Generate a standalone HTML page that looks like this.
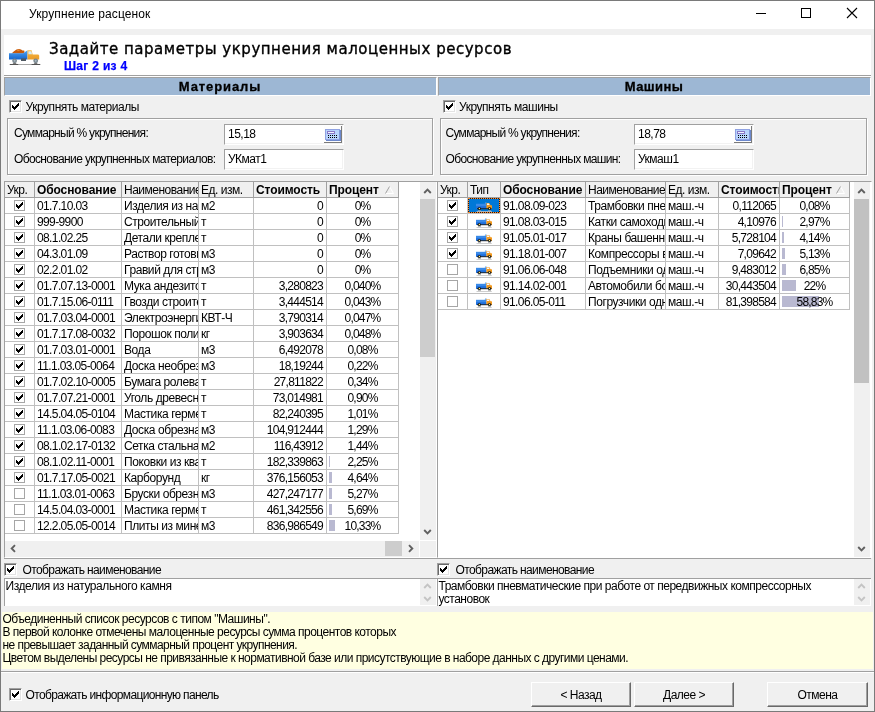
<!DOCTYPE html>
<html lang="ru"><head><meta charset="utf-8"><title>Укрупнение расценок</title>
<style>
*{box-sizing:border-box;margin:0;padding:0}
html,body{width:875px;height:712px;overflow:hidden;background:#f0f0f0}
body{font-family:"Liberation Sans","DejaVu Sans",sans-serif;font-size:11px;color:#000;position:relative}
#root{position:absolute;left:0;top:0;width:875px;height:712px;will-change:transform}
.a{position:absolute}
.t{position:absolute;white-space:nowrap;line-height:13px;height:13px;letter-spacing:-0.58px;font-size:12px}
.b{font-weight:bold}
.cell{position:absolute;white-space:nowrap;overflow:hidden;line-height:13px;height:15px;padding-top:2px}
.cell span,.hdr span,.inp span,.btn span{font-size:12px;letter-spacing:-0.5px}
.hl{position:absolute;height:1px;background:#c0c0c0}
.vl{position:absolute;width:1px;background:#c0c0c0}
.hdr{position:absolute;background:#f0f0f0;border-right:1px solid #a0a0a0;border-bottom:1px solid #a0a0a0;height:16px;line-height:13px;padding:2px 0 0 2px;overflow:hidden;white-space:nowrap}
.hdr.b span{letter-spacing:-0.1px}
.cb{position:absolute;width:13px;height:13px;background:#fff;border:1px solid #a0a0a0;border-right-color:#fff;border-bottom-color:#fff;box-shadow:inset 1px 1px 0 #696969, inset -1px -1px 0 #e3e3e3}
.fcb{position:absolute;width:11px;height:11px;background:#fff;border:1px solid #a6a6a6}
.inp{position:absolute;background:#fff;border:1px solid #a0a0a0;border-right-color:#fff;border-bottom-color:#fff;line-height:13px;padding:3px 0 0 3px;box-shadow:inset -1px -1px 0 #f2f2f2}
.btn{position:absolute;height:25px;background:#f0f0f0;border:1px solid #fff;border-right-color:#696969;border-bottom-color:#696969;box-shadow:inset -1px -1px 0 #a0a0a0;text-align:center;line-height:13px;padding-top:6px}
.sb{position:absolute;background:#f0f0f0}
.th{position:absolute;background:#cdcdcd}
</style></head>
<body><div id="root">
<div class="a" style="left:0px;top:0px;width:875px;height:712px;border:1px solid #7a7a7a;background:#f0f0f0"></div>
<div class="a" style="left:1px;top:1px;width:873px;height:28px;background:#fff"></div>
<div class="t" style="left:29px;top:7px;font-size:12px;line-height:14px;height:14px;letter-spacing:0.114px">Укрупнение расценок</div>
<svg class="a" style="left:740px;top:1px" width="134" height="28" viewBox="0 0 134 28" shape-rendering="crispEdges"><rect x="16" y="12" width="10" height="1" fill="#000"/><rect x="61.5" y="7.5" width="9" height="9" fill="none" stroke="#000" stroke-width="1"/><path d="M107 7l10 10M117 7l-10 10" stroke="#000" stroke-width="1.1" shape-rendering="auto"/></svg>
<div class="a" style="left:4px;top:35px;width:867px;height:40px;background:#fff"></div>
<div class="a" style="left:4px;top:75px;width:867px;height:1px;background:#a0a0a0"></div>
<div class="a" style="left:4px;top:76px;width:867px;height:1px;background:#fff"></div>
<svg class="a" style="left:8px;top:47px" width="34" height="19" viewBox="0 0 34 19"><defs><linearGradient id="gb" x1="0" y1="0" x2="0" y2="1"><stop offset="0" stop-color="#4ea4f4"/><stop offset="1" stop-color="#1565cc"/></linearGradient><linearGradient id="go" x1="0" y1="0" x2="0" y2="1"><stop offset="0" stop-color="#f8b840"/><stop offset="1" stop-color="#e89a28"/></linearGradient></defs><path d="M3.5 6.4L6 4.2L8.5 2.6L11 2L13 2.4L14.5 3.6L16.2 3.4L16.5 5L15.5 6.4z" fill="#c65a0a"/><path d="M8.5 3.2L11 2.6L12 3.6L10 4.2z" fill="#e8882a"/><path d="M1 6.2H15.2L19.5 3.2V12.6H1z" fill="url(#gb)"/><path d="M19.5 12.6V3.6L20.4 3.2H23.6L24.6 7.6H30.4L31.2 8.6V12.6z" fill="url(#go)"/><path d="M20.4 4.2H23.4L24 7.2H20.4z" fill="#d4ebf8"/><rect x="13" y="11.4" width="5" height="2.6" fill="#4f5962"/><circle cx="6.6" cy="13.8" r="2.4" fill="#78868e"/><circle cx="27.7" cy="13.8" r="2.4" fill="#78868e"/><circle cx="6.6" cy="13.8" r="1" fill="#aab8c0"/><circle cx="27.7" cy="13.8" r="1" fill="#aab8c0"/><rect x="1.8" y="17" width="30.4" height="1" fill="#a8a8a8"/><rect x="1.8" y="17" width="8.4" height="1" fill="#555"/><rect x="23.6" y="17" width="8.6" height="1" fill="#555"/><path d="M4.6 17L5.4 16h2.4l.8 1zM25.7 17l.8-1h2.4l.8 1z" fill="#777"/></svg>
<div class="t" style="left:49px;top:39px;font-family:'DejaVu Sans',sans-serif;font-size:15px;line-height:20px;height:20px;-webkit-text-stroke:0.35px #000;letter-spacing:0.521px">Задайте параметры укрупнения малоценных ресурсов</div>
<div class="t b" style="left:64px;top:60px;color:#00f;-webkit-text-stroke:0.25px #00f;letter-spacing:0.308px">Шаг 2 из 4</div>
<div class="a" style="left:4px;top:77px;width:433px;height:19px;background:#9db7d4;border:1px solid #a0a0a0;border-right-color:#fff;border-bottom-color:#fff"></div>
<div class="a" style="left:438px;top:77px;width:433px;height:19px;background:#9db7d4;border:1px solid #a0a0a0;border-right-color:#fff;border-bottom-color:#fff"></div>
<div class="t b" style="left:4px;top:79px;width:432px;text-align:center;font-size:13px;line-height:15px;height:15px;letter-spacing:0.9px;-webkit-text-stroke:0.3px #000">Материалы</div>
<div class="t b" style="left:438px;top:79px;width:432px;text-align:center;font-size:13px;line-height:15px;height:15px;letter-spacing:0.4px;-webkit-text-stroke:0.3px #000">Машины</div>
<div class="cb" style="left:9px;top:100px"><svg class="a" style="left:2px;top:2px" width="7" height="7" viewBox="0 0 7 7" shape-rendering="crispEdges"><path d="M0 2h1v1h1v1h1v-1h1v-1h1v-1h1v-1h1v3h-1v1h-1v1h-1v1h-1v1h-1v-1h-1v-1h-1z" fill="#000"/></svg></div>
<div class="t" style="left:25.5px;top:101px;;letter-spacing:-0.445px">Укрупнять материалы</div>
<div class="cb" style="left:443px;top:100px"><svg class="a" style="left:2px;top:2px" width="7" height="7" viewBox="0 0 7 7" shape-rendering="crispEdges"><path d="M0 2h1v1h1v1h1v-1h1v-1h1v-1h1v-1h1v3h-1v1h-1v1h-1v1h-1v1h-1v-1h-1v-1h-1z" fill="#000"/></svg></div>
<div class="t" style="left:459px;top:101px;;letter-spacing:-0.456px">Укрупнять машины</div>
<div class="a" style="left:7px;top:118px;width:426px;height:57px;border:1px solid #a0a0a0;box-shadow:inset 1px 1px 0 #fff,1px 1px 0 #fff"></div>
<div class="a" style="left:440px;top:118px;width:427px;height:57px;border:1px solid #a0a0a0;box-shadow:inset 1px 1px 0 #fff,1px 1px 0 #fff"></div>
<div class="t" style="left:14px;top:127px;;letter-spacing:-0.714px">Суммарный % укрупнения:</div>
<div class="t" style="left:14px;top:153px;;letter-spacing:-0.629px">Обоснование укрупненных материалов:</div>
<div class="t" style="left:445.5px;top:127px;;letter-spacing:-0.714px">Суммарный % укрупнения:</div>
<div class="t" style="left:445.5px;top:153px;;letter-spacing:-0.648px">Обоснование укрупненных машин:</div>
<div class="inp" style="left:224px;top:124px;width:120px;height:21px"><span>15,18</span></div>
<div class="a" style="left:324px;top:126px;width:18px;height:17px;background:#fdfdfd;border-right:1px solid #7a7a7a;border-bottom:1px solid #7a7a7a"></div><svg class="a" style="left:325px;top:129px" width="16" height="12" viewBox="0 0 16 12" shape-rendering="crispEdges"><rect x="0" y="0" width="15" height="11" fill="#90a2e2"/><rect x="1" y="1" width="13" height="9" fill="#b8d4fc"/><rect x="15" y="1" width="1" height="11" fill="#6c88cc"/><rect x="1" y="11" width="15" height="1" fill="#6c88cc"/><rect x="14" y="1" width="1" height="10" fill="#8098d8"/><rect x="2" y="2" width="8" height="3" fill="#8a78c6"/><rect x="3" y="3" width="6" height="1" fill="#eef4ff"/><rect x="3" y="6" width="1" height="1" fill="#000"/><rect x="5" y="6" width="1" height="1" fill="#000"/><rect x="7" y="6" width="1" height="1" fill="#000"/><rect x="9" y="6" width="1" height="1" fill="#000"/><rect x="11" y="6" width="1" height="1" fill="#000"/><rect x="3" y="8" width="1" height="1" fill="#000"/><rect x="5" y="8" width="1" height="1" fill="#000"/><rect x="7" y="8" width="1" height="1" fill="#000"/><rect x="9" y="8" width="1" height="1" fill="#000"/><rect x="11" y="8" width="1" height="1" fill="#000"/></svg>
<div class="inp" style="left:224px;top:149px;width:120px;height:21px"><span>УКмат1</span></div>
<div class="inp" style="left:634px;top:124px;width:120px;height:21px"><span>18,78</span></div>
<div class="a" style="left:734px;top:126px;width:18px;height:17px;background:#fdfdfd;border-right:1px solid #7a7a7a;border-bottom:1px solid #7a7a7a"></div><svg class="a" style="left:735px;top:129px" width="16" height="12" viewBox="0 0 16 12" shape-rendering="crispEdges"><rect x="0" y="0" width="15" height="11" fill="#90a2e2"/><rect x="1" y="1" width="13" height="9" fill="#b8d4fc"/><rect x="15" y="1" width="1" height="11" fill="#6c88cc"/><rect x="1" y="11" width="15" height="1" fill="#6c88cc"/><rect x="14" y="1" width="1" height="10" fill="#8098d8"/><rect x="2" y="2" width="8" height="3" fill="#8a78c6"/><rect x="3" y="3" width="6" height="1" fill="#eef4ff"/><rect x="3" y="6" width="1" height="1" fill="#000"/><rect x="5" y="6" width="1" height="1" fill="#000"/><rect x="7" y="6" width="1" height="1" fill="#000"/><rect x="9" y="6" width="1" height="1" fill="#000"/><rect x="11" y="6" width="1" height="1" fill="#000"/><rect x="3" y="8" width="1" height="1" fill="#000"/><rect x="5" y="8" width="1" height="1" fill="#000"/><rect x="7" y="8" width="1" height="1" fill="#000"/><rect x="9" y="8" width="1" height="1" fill="#000"/><rect x="11" y="8" width="1" height="1" fill="#000"/></svg>
<div class="inp" style="left:634px;top:149px;width:120px;height:21px"><span>Укмаш1</span></div>
<div class="a" style="left:4px;top:181px;width:434px;height:377px;background:#fff;border-left:1px solid #a0a0a0;border-top:1px solid #a0a0a0;border-right:1px solid #fff;border-bottom:1px solid #fff"></div>
<div class="hdr" style="left:5px;top:182px;width:30px;"><span>Укр.</span></div>
<div class="hdr b" style="left:35px;top:182px;width:87px;"><span>Обоснование</span></div>
<div class="hdr" style="left:122px;top:182px;width:77px;"><span>Наименование</span></div>
<div class="hdr" style="left:199px;top:182px;width:55px;"><span>Ед. изм.</span></div>
<div class="hdr b" style="left:254px;top:182px;width:73px;"><span>Стоимость</span></div>
<div class="hdr b" style="left:327px;top:182px;width:72px;"><span>Процент</span></div>
<svg class="a" style="left:385px;top:186px" width="9" height="8" viewBox="0 0 9 8"><path d="M4.5 0.5L8.5 7.5H0.5" fill="none" stroke="#fff"/><path d="M4.5 0.5L0.5 7.5" fill="none" stroke="#a0a0a0"/></svg>
<div class="hl" style="left:5px;top:213px;width:394px"></div>
<div class="hl" style="left:5px;top:229px;width:394px"></div>
<div class="hl" style="left:5px;top:245px;width:394px"></div>
<div class="hl" style="left:5px;top:261px;width:394px"></div>
<div class="hl" style="left:5px;top:277px;width:394px"></div>
<div class="hl" style="left:5px;top:293px;width:394px"></div>
<div class="hl" style="left:5px;top:309px;width:394px"></div>
<div class="hl" style="left:5px;top:325px;width:394px"></div>
<div class="hl" style="left:5px;top:341px;width:394px"></div>
<div class="hl" style="left:5px;top:357px;width:394px"></div>
<div class="hl" style="left:5px;top:373px;width:394px"></div>
<div class="hl" style="left:5px;top:389px;width:394px"></div>
<div class="hl" style="left:5px;top:405px;width:394px"></div>
<div class="hl" style="left:5px;top:421px;width:394px"></div>
<div class="hl" style="left:5px;top:437px;width:394px"></div>
<div class="hl" style="left:5px;top:453px;width:394px"></div>
<div class="hl" style="left:5px;top:469px;width:394px"></div>
<div class="hl" style="left:5px;top:485px;width:394px"></div>
<div class="hl" style="left:5px;top:501px;width:394px"></div>
<div class="hl" style="left:5px;top:517px;width:394px"></div>
<div class="hl" style="left:5px;top:533px;width:394px"></div>
<div class="vl" style="left:34px;top:198px;height:336px"></div>
<div class="vl" style="left:121px;top:198px;height:336px"></div>
<div class="vl" style="left:198px;top:198px;height:336px"></div>
<div class="vl" style="left:253px;top:198px;height:336px"></div>
<div class="vl" style="left:326px;top:198px;height:336px"></div>
<div class="vl" style="left:398px;top:198px;height:336px"></div>
<div class="fcb" style="left:14px;top:200px"><svg class="a" style="left:1px;top:1px" width="7" height="7" viewBox="0 0 7 7" shape-rendering="crispEdges"><path d="M0 2h1v1h1v1h1v-1h1v-1h1v-1h1v-1h1v3h-1v1h-1v1h-1v1h-1v1h-1v-1h-1v-1h-1z" fill="#000"/></svg></div>
<div class="cell" style="left:35px;top:198px;width:86px;padding-left:2px"><span style="letter-spacing:-0.62px">01.7.10.03</span></div>
<div class="cell" style="left:122px;top:198px;width:76px;padding-left:2px"><span style="letter-spacing:-0.42px">Изделия из натурального камня</span></div>
<div class="cell" style="left:199px;top:198px;width:54px;padding-left:2px"><span style="letter-spacing:-0.42px">м2</span></div>
<div class="cell" style="left:254px;top:198px;width:72px;text-align:right;padding-right:3px;letter-spacing:-0.72px"><span style="letter-spacing:-0.72px">0</span></div>
<div class="cell" style="left:327px;top:198px;width:71px;text-align:center"><span style="letter-spacing:-0.8px">0%</span></div>
<div class="fcb" style="left:14px;top:216px"><svg class="a" style="left:1px;top:1px" width="7" height="7" viewBox="0 0 7 7" shape-rendering="crispEdges"><path d="M0 2h1v1h1v1h1v-1h1v-1h1v-1h1v-1h1v3h-1v1h-1v1h-1v1h-1v1h-1v-1h-1v-1h-1z" fill="#000"/></svg></div>
<div class="cell" style="left:35px;top:214px;width:86px;padding-left:2px"><span style="letter-spacing:-0.62px">999-9900</span></div>
<div class="cell" style="left:122px;top:214px;width:76px;padding-left:2px"><span style="letter-spacing:-0.42px">Строительный мусор</span></div>
<div class="cell" style="left:199px;top:214px;width:54px;padding-left:2px"><span style="letter-spacing:-0.42px">т</span></div>
<div class="cell" style="left:254px;top:214px;width:72px;text-align:right;padding-right:3px;letter-spacing:-0.72px"><span style="letter-spacing:-0.72px">0</span></div>
<div class="cell" style="left:327px;top:214px;width:71px;text-align:center"><span style="letter-spacing:-0.8px">0%</span></div>
<div class="fcb" style="left:14px;top:232px"><svg class="a" style="left:1px;top:1px" width="7" height="7" viewBox="0 0 7 7" shape-rendering="crispEdges"><path d="M0 2h1v1h1v1h1v-1h1v-1h1v-1h1v-1h1v3h-1v1h-1v1h-1v1h-1v1h-1v-1h-1v-1h-1z" fill="#000"/></svg></div>
<div class="cell" style="left:35px;top:230px;width:86px;padding-left:2px"><span style="letter-spacing:-0.62px">08.1.02.25</span></div>
<div class="cell" style="left:122px;top:230px;width:76px;padding-left:2px"><span style="letter-spacing:-0.42px">Детали крепления</span></div>
<div class="cell" style="left:199px;top:230px;width:54px;padding-left:2px"><span style="letter-spacing:-0.42px">т</span></div>
<div class="cell" style="left:254px;top:230px;width:72px;text-align:right;padding-right:3px;letter-spacing:-0.72px"><span style="letter-spacing:-0.72px">0</span></div>
<div class="cell" style="left:327px;top:230px;width:71px;text-align:center"><span style="letter-spacing:-0.8px">0%</span></div>
<div class="fcb" style="left:14px;top:248px"><svg class="a" style="left:1px;top:1px" width="7" height="7" viewBox="0 0 7 7" shape-rendering="crispEdges"><path d="M0 2h1v1h1v1h1v-1h1v-1h1v-1h1v-1h1v3h-1v1h-1v1h-1v1h-1v1h-1v-1h-1v-1h-1z" fill="#000"/></svg></div>
<div class="cell" style="left:35px;top:246px;width:86px;padding-left:2px"><span style="letter-spacing:-0.62px">04.3.01.09</span></div>
<div class="cell" style="left:122px;top:246px;width:76px;padding-left:2px"><span style="letter-spacing:-0.42px">Раствор готовый</span></div>
<div class="cell" style="left:199px;top:246px;width:54px;padding-left:2px"><span style="letter-spacing:-0.42px">м3</span></div>
<div class="cell" style="left:254px;top:246px;width:72px;text-align:right;padding-right:3px;letter-spacing:-0.72px"><span style="letter-spacing:-0.72px">0</span></div>
<div class="cell" style="left:327px;top:246px;width:71px;text-align:center"><span style="letter-spacing:-0.8px">0%</span></div>
<div class="fcb" style="left:14px;top:264px"><svg class="a" style="left:1px;top:1px" width="7" height="7" viewBox="0 0 7 7" shape-rendering="crispEdges"><path d="M0 2h1v1h1v1h1v-1h1v-1h1v-1h1v-1h1v3h-1v1h-1v1h-1v1h-1v1h-1v-1h-1v-1h-1z" fill="#000"/></svg></div>
<div class="cell" style="left:35px;top:262px;width:86px;padding-left:2px"><span style="letter-spacing:-0.62px">02.2.01.02</span></div>
<div class="cell" style="left:122px;top:262px;width:76px;padding-left:2px"><span style="letter-spacing:-0.42px">Гравий для строительных работ</span></div>
<div class="cell" style="left:199px;top:262px;width:54px;padding-left:2px"><span style="letter-spacing:-0.42px">м3</span></div>
<div class="cell" style="left:254px;top:262px;width:72px;text-align:right;padding-right:3px;letter-spacing:-0.72px"><span style="letter-spacing:-0.72px">0</span></div>
<div class="cell" style="left:327px;top:262px;width:71px;text-align:center"><span style="letter-spacing:-0.8px">0%</span></div>
<div class="fcb" style="left:14px;top:280px"><svg class="a" style="left:1px;top:1px" width="7" height="7" viewBox="0 0 7 7" shape-rendering="crispEdges"><path d="M0 2h1v1h1v1h1v-1h1v-1h1v-1h1v-1h1v3h-1v1h-1v1h-1v1h-1v1h-1v-1h-1v-1h-1z" fill="#000"/></svg></div>
<div class="cell" style="left:35px;top:278px;width:86px;padding-left:2px"><span style="letter-spacing:-0.62px">01.7.07.13-0001</span></div>
<div class="cell" style="left:122px;top:278px;width:76px;padding-left:2px"><span style="letter-spacing:-0.42px">Мука андезитовая</span></div>
<div class="cell" style="left:199px;top:278px;width:54px;padding-left:2px"><span style="letter-spacing:-0.42px">т</span></div>
<div class="cell" style="left:254px;top:278px;width:72px;text-align:right;padding-right:3px;letter-spacing:-0.72px"><span style="letter-spacing:-0.72px">3,280823</span></div>
<div class="cell" style="left:327px;top:278px;width:71px;text-align:center"><span style="letter-spacing:-0.8px">0,040%</span></div>
<div class="fcb" style="left:14px;top:296px"><svg class="a" style="left:1px;top:1px" width="7" height="7" viewBox="0 0 7 7" shape-rendering="crispEdges"><path d="M0 2h1v1h1v1h1v-1h1v-1h1v-1h1v-1h1v3h-1v1h-1v1h-1v1h-1v1h-1v-1h-1v-1h-1z" fill="#000"/></svg></div>
<div class="cell" style="left:35px;top:294px;width:86px;padding-left:2px"><span style="letter-spacing:-0.62px">01.7.15.06-0111</span></div>
<div class="cell" style="left:122px;top:294px;width:76px;padding-left:2px"><span style="letter-spacing:-0.42px">Гвозди строительные</span></div>
<div class="cell" style="left:199px;top:294px;width:54px;padding-left:2px"><span style="letter-spacing:-0.42px">т</span></div>
<div class="cell" style="left:254px;top:294px;width:72px;text-align:right;padding-right:3px;letter-spacing:-0.72px"><span style="letter-spacing:-0.72px">3,444514</span></div>
<div class="cell" style="left:327px;top:294px;width:71px;text-align:center"><span style="letter-spacing:-0.8px">0,043%</span></div>
<div class="fcb" style="left:14px;top:312px"><svg class="a" style="left:1px;top:1px" width="7" height="7" viewBox="0 0 7 7" shape-rendering="crispEdges"><path d="M0 2h1v1h1v1h1v-1h1v-1h1v-1h1v-1h1v3h-1v1h-1v1h-1v1h-1v1h-1v-1h-1v-1h-1z" fill="#000"/></svg></div>
<div class="cell" style="left:35px;top:310px;width:86px;padding-left:2px"><span style="letter-spacing:-0.62px">01.7.03.04-0001</span></div>
<div class="cell" style="left:122px;top:310px;width:76px;padding-left:2px"><span style="letter-spacing:-0.42px">Электроэнергия</span></div>
<div class="cell" style="left:199px;top:310px;width:54px;padding-left:2px"><span style="letter-spacing:-0.42px">КВТ-Ч</span></div>
<div class="cell" style="left:254px;top:310px;width:72px;text-align:right;padding-right:3px;letter-spacing:-0.72px"><span style="letter-spacing:-0.72px">3,790314</span></div>
<div class="cell" style="left:327px;top:310px;width:71px;text-align:center"><span style="letter-spacing:-0.8px">0,047%</span></div>
<div class="fcb" style="left:14px;top:328px"><svg class="a" style="left:1px;top:1px" width="7" height="7" viewBox="0 0 7 7" shape-rendering="crispEdges"><path d="M0 2h1v1h1v1h1v-1h1v-1h1v-1h1v-1h1v3h-1v1h-1v1h-1v1h-1v1h-1v-1h-1v-1h-1z" fill="#000"/></svg></div>
<div class="cell" style="left:35px;top:326px;width:86px;padding-left:2px"><span style="letter-spacing:-0.62px">01.7.17.08-0032</span></div>
<div class="cell" style="left:122px;top:326px;width:76px;padding-left:2px"><span style="letter-spacing:-0.42px">Порошок полимерный</span></div>
<div class="cell" style="left:199px;top:326px;width:54px;padding-left:2px"><span style="letter-spacing:-0.42px">кг</span></div>
<div class="cell" style="left:254px;top:326px;width:72px;text-align:right;padding-right:3px;letter-spacing:-0.72px"><span style="letter-spacing:-0.72px">3,903634</span></div>
<div class="cell" style="left:327px;top:326px;width:71px;text-align:center"><span style="letter-spacing:-0.8px">0,048%</span></div>
<div class="fcb" style="left:14px;top:344px"><svg class="a" style="left:1px;top:1px" width="7" height="7" viewBox="0 0 7 7" shape-rendering="crispEdges"><path d="M0 2h1v1h1v1h1v-1h1v-1h1v-1h1v-1h1v3h-1v1h-1v1h-1v1h-1v1h-1v-1h-1v-1h-1z" fill="#000"/></svg></div>
<div class="cell" style="left:35px;top:342px;width:86px;padding-left:2px"><span style="letter-spacing:-0.62px">01.7.03.01-0001</span></div>
<div class="cell" style="left:122px;top:342px;width:76px;padding-left:2px"><span style="letter-spacing:-0.42px">Вода</span></div>
<div class="cell" style="left:199px;top:342px;width:54px;padding-left:2px"><span style="letter-spacing:-0.42px">м3</span></div>
<div class="cell" style="left:254px;top:342px;width:72px;text-align:right;padding-right:3px;letter-spacing:-0.72px"><span style="letter-spacing:-0.72px">6,492078</span></div>
<div class="cell" style="left:327px;top:342px;width:71px;text-align:center"><span style="letter-spacing:-0.8px">0,08%</span></div>
<div class="fcb" style="left:14px;top:360px"><svg class="a" style="left:1px;top:1px" width="7" height="7" viewBox="0 0 7 7" shape-rendering="crispEdges"><path d="M0 2h1v1h1v1h1v-1h1v-1h1v-1h1v-1h1v3h-1v1h-1v1h-1v1h-1v1h-1v-1h-1v-1h-1z" fill="#000"/></svg></div>
<div class="cell" style="left:35px;top:358px;width:86px;padding-left:2px"><span style="letter-spacing:-0.62px">11.1.03.05-0064</span></div>
<div class="cell" style="left:122px;top:358px;width:76px;padding-left:2px"><span style="letter-spacing:-0.42px">Доска необрезная</span></div>
<div class="cell" style="left:199px;top:358px;width:54px;padding-left:2px"><span style="letter-spacing:-0.42px">м3</span></div>
<div class="cell" style="left:254px;top:358px;width:72px;text-align:right;padding-right:3px;letter-spacing:-0.72px"><span style="letter-spacing:-0.72px">18,19244</span></div>
<div class="cell" style="left:327px;top:358px;width:71px;text-align:center"><span style="letter-spacing:-0.8px">0,22%</span></div>
<div class="fcb" style="left:14px;top:376px"><svg class="a" style="left:1px;top:1px" width="7" height="7" viewBox="0 0 7 7" shape-rendering="crispEdges"><path d="M0 2h1v1h1v1h1v-1h1v-1h1v-1h1v-1h1v3h-1v1h-1v1h-1v1h-1v1h-1v-1h-1v-1h-1z" fill="#000"/></svg></div>
<div class="cell" style="left:35px;top:374px;width:86px;padding-left:2px"><span style="letter-spacing:-0.62px">01.7.02.10-0005</span></div>
<div class="cell" style="left:122px;top:374px;width:76px;padding-left:2px"><span style="letter-spacing:-0.42px">Бумага ролевая</span></div>
<div class="cell" style="left:199px;top:374px;width:54px;padding-left:2px"><span style="letter-spacing:-0.42px">т</span></div>
<div class="cell" style="left:254px;top:374px;width:72px;text-align:right;padding-right:3px;letter-spacing:-0.72px"><span style="letter-spacing:-0.72px">27,811822</span></div>
<div class="cell" style="left:327px;top:374px;width:71px;text-align:center"><span style="letter-spacing:-0.8px">0,34%</span></div>
<div class="fcb" style="left:14px;top:392px"><svg class="a" style="left:1px;top:1px" width="7" height="7" viewBox="0 0 7 7" shape-rendering="crispEdges"><path d="M0 2h1v1h1v1h1v-1h1v-1h1v-1h1v-1h1v3h-1v1h-1v1h-1v1h-1v1h-1v-1h-1v-1h-1z" fill="#000"/></svg></div>
<div class="cell" style="left:35px;top:390px;width:86px;padding-left:2px"><span style="letter-spacing:-0.62px">01.7.07.21-0001</span></div>
<div class="cell" style="left:122px;top:390px;width:76px;padding-left:2px"><span style="letter-spacing:-0.42px">Уголь древесный</span></div>
<div class="cell" style="left:199px;top:390px;width:54px;padding-left:2px"><span style="letter-spacing:-0.42px">т</span></div>
<div class="cell" style="left:254px;top:390px;width:72px;text-align:right;padding-right:3px;letter-spacing:-0.72px"><span style="letter-spacing:-0.72px">73,014981</span></div>
<div class="cell" style="left:327px;top:390px;width:71px;text-align:center"><span style="letter-spacing:-0.8px">0,90%</span></div>
<div class="fcb" style="left:14px;top:408px"><svg class="a" style="left:1px;top:1px" width="7" height="7" viewBox="0 0 7 7" shape-rendering="crispEdges"><path d="M0 2h1v1h1v1h1v-1h1v-1h1v-1h1v-1h1v3h-1v1h-1v1h-1v1h-1v1h-1v-1h-1v-1h-1z" fill="#000"/></svg></div>
<div class="cell" style="left:35px;top:406px;width:86px;padding-left:2px"><span style="letter-spacing:-0.62px">14.5.04.05-0104</span></div>
<div class="cell" style="left:122px;top:406px;width:76px;padding-left:2px"><span style="letter-spacing:-0.42px">Мастика герметизирующая</span></div>
<div class="cell" style="left:199px;top:406px;width:54px;padding-left:2px"><span style="letter-spacing:-0.42px">т</span></div>
<div class="cell" style="left:254px;top:406px;width:72px;text-align:right;padding-right:3px;letter-spacing:-0.72px"><span style="letter-spacing:-0.72px">82,240395</span></div>
<div class="cell" style="left:327px;top:406px;width:71px;text-align:center"><span style="letter-spacing:-0.8px">1,01%</span></div>
<div class="fcb" style="left:14px;top:424px"><svg class="a" style="left:1px;top:1px" width="7" height="7" viewBox="0 0 7 7" shape-rendering="crispEdges"><path d="M0 2h1v1h1v1h1v-1h1v-1h1v-1h1v-1h1v3h-1v1h-1v1h-1v1h-1v1h-1v-1h-1v-1h-1z" fill="#000"/></svg></div>
<div class="cell" style="left:35px;top:422px;width:86px;padding-left:2px"><span style="letter-spacing:-0.62px">11.1.03.06-0083</span></div>
<div class="cell" style="left:122px;top:422px;width:76px;padding-left:2px"><span style="letter-spacing:-0.42px">Доска обрезная</span></div>
<div class="cell" style="left:199px;top:422px;width:54px;padding-left:2px"><span style="letter-spacing:-0.42px">м3</span></div>
<div class="cell" style="left:254px;top:422px;width:72px;text-align:right;padding-right:3px;letter-spacing:-0.72px"><span style="letter-spacing:-0.72px">104,912444</span></div>
<div class="cell" style="left:327px;top:422px;width:71px;text-align:center"><span style="letter-spacing:-0.8px">1,29%</span></div>
<div class="fcb" style="left:14px;top:440px"><svg class="a" style="left:1px;top:1px" width="7" height="7" viewBox="0 0 7 7" shape-rendering="crispEdges"><path d="M0 2h1v1h1v1h1v-1h1v-1h1v-1h1v-1h1v3h-1v1h-1v1h-1v1h-1v1h-1v-1h-1v-1h-1z" fill="#000"/></svg></div>
<div class="cell" style="left:35px;top:438px;width:86px;padding-left:2px"><span style="letter-spacing:-0.62px">08.1.02.17-0132</span></div>
<div class="cell" style="left:122px;top:438px;width:76px;padding-left:2px"><span style="letter-spacing:-0.42px">Сетка стальная</span></div>
<div class="cell" style="left:199px;top:438px;width:54px;padding-left:2px"><span style="letter-spacing:-0.42px">м2</span></div>
<div class="cell" style="left:254px;top:438px;width:72px;text-align:right;padding-right:3px;letter-spacing:-0.72px"><span style="letter-spacing:-0.72px">116,43912</span></div>
<div class="cell" style="left:327px;top:438px;width:71px;text-align:center"><span style="letter-spacing:-0.8px">1,44%</span></div>
<div class="fcb" style="left:14px;top:456px"><svg class="a" style="left:1px;top:1px" width="7" height="7" viewBox="0 0 7 7" shape-rendering="crispEdges"><path d="M0 2h1v1h1v1h1v-1h1v-1h1v-1h1v-1h1v3h-1v1h-1v1h-1v1h-1v1h-1v-1h-1v-1h-1z" fill="#000"/></svg></div>
<div class="cell" style="left:35px;top:454px;width:86px;padding-left:2px"><span style="letter-spacing:-0.62px">08.1.02.11-0001</span></div>
<div class="cell" style="left:122px;top:454px;width:76px;padding-left:2px"><span style="letter-spacing:-0.42px">Поковки из квадратных заготовок</span></div>
<div class="cell" style="left:199px;top:454px;width:54px;padding-left:2px"><span style="letter-spacing:-0.42px">т</span></div>
<div class="cell" style="left:254px;top:454px;width:72px;text-align:right;padding-right:3px;letter-spacing:-0.72px"><span style="letter-spacing:-0.72px">182,339863</span></div>
<div class="a" style="left:329px;top:456px;width:1px;height:11px;background:#b9b9d1"></div>
<div class="cell" style="left:327px;top:454px;width:71px;text-align:center"><span style="letter-spacing:-0.8px">2,25%</span></div>
<div class="fcb" style="left:14px;top:472px"><svg class="a" style="left:1px;top:1px" width="7" height="7" viewBox="0 0 7 7" shape-rendering="crispEdges"><path d="M0 2h1v1h1v1h1v-1h1v-1h1v-1h1v-1h1v3h-1v1h-1v1h-1v1h-1v1h-1v-1h-1v-1h-1z" fill="#000"/></svg></div>
<div class="cell" style="left:35px;top:470px;width:86px;padding-left:2px"><span style="letter-spacing:-0.62px">01.7.17.05-0021</span></div>
<div class="cell" style="left:122px;top:470px;width:76px;padding-left:2px"><span style="letter-spacing:-0.42px">Карборунд</span></div>
<div class="cell" style="left:199px;top:470px;width:54px;padding-left:2px"><span style="letter-spacing:-0.42px">кг</span></div>
<div class="cell" style="left:254px;top:470px;width:72px;text-align:right;padding-right:3px;letter-spacing:-0.72px"><span style="letter-spacing:-0.72px">376,156053</span></div>
<div class="a" style="left:329px;top:472px;width:3px;height:11px;background:#b9b9d1"></div>
<div class="cell" style="left:327px;top:470px;width:71px;text-align:center"><span style="letter-spacing:-0.8px">4,64%</span></div>
<div class="fcb" style="left:14px;top:488px"></div>
<div class="cell" style="left:35px;top:486px;width:86px;padding-left:2px"><span style="letter-spacing:-0.62px">11.1.03.01-0063</span></div>
<div class="cell" style="left:122px;top:486px;width:76px;padding-left:2px"><span style="letter-spacing:-0.42px">Бруски обрезные</span></div>
<div class="cell" style="left:199px;top:486px;width:54px;padding-left:2px"><span style="letter-spacing:-0.42px">м3</span></div>
<div class="cell" style="left:254px;top:486px;width:72px;text-align:right;padding-right:3px;letter-spacing:-0.72px"><span style="letter-spacing:-0.72px">427,247177</span></div>
<div class="a" style="left:329px;top:488px;width:3px;height:11px;background:#b9b9d1"></div>
<div class="cell" style="left:327px;top:486px;width:71px;text-align:center"><span style="letter-spacing:-0.8px">5,27%</span></div>
<div class="fcb" style="left:14px;top:504px"></div>
<div class="cell" style="left:35px;top:502px;width:86px;padding-left:2px"><span style="letter-spacing:-0.62px">14.5.04.03-0001</span></div>
<div class="cell" style="left:122px;top:502px;width:76px;padding-left:2px"><span style="letter-spacing:-0.42px">Мастика герметизирующая</span></div>
<div class="cell" style="left:199px;top:502px;width:54px;padding-left:2px"><span style="letter-spacing:-0.42px">т</span></div>
<div class="cell" style="left:254px;top:502px;width:72px;text-align:right;padding-right:3px;letter-spacing:-0.72px"><span style="letter-spacing:-0.72px">461,342556</span></div>
<div class="a" style="left:329px;top:504px;width:3px;height:11px;background:#b9b9d1"></div>
<div class="cell" style="left:327px;top:502px;width:71px;text-align:center"><span style="letter-spacing:-0.8px">5,69%</span></div>
<div class="fcb" style="left:14px;top:520px"></div>
<div class="cell" style="left:35px;top:518px;width:86px;padding-left:2px"><span style="letter-spacing:-0.62px">12.2.05.05-0014</span></div>
<div class="cell" style="left:122px;top:518px;width:76px;padding-left:2px"><span style="letter-spacing:-0.42px">Плиты из минеральной ваты</span></div>
<div class="cell" style="left:199px;top:518px;width:54px;padding-left:2px"><span style="letter-spacing:-0.42px">м3</span></div>
<div class="cell" style="left:254px;top:518px;width:72px;text-align:right;padding-right:3px;letter-spacing:-0.72px"><span style="letter-spacing:-0.72px">836,986549</span></div>
<div class="a" style="left:329px;top:520px;width:6px;height:11px;background:#b9b9d1"></div>
<div class="cell" style="left:327px;top:518px;width:71px;text-align:center"><span style="letter-spacing:-0.8px">10,33%</span></div>
<div class="sb" style="left:420px;top:182px;width:16px;height:358px;"></div>
<div class="th" style="left:420px;top:199px;width:15px;height:158px;background:#cdcdcd"></div>
<svg class="a" style="left:423px;top:187px" width="9" height="9" viewBox="0 0 9 9"><path d="M1.2 6L4.5 2.7L7.8 6" fill="none" stroke="#606060" stroke-width="1.9"/></svg>
<svg class="a" style="left:423px;top:527px" width="9" height="9" viewBox="0 0 9 9"><path d="M1.2 3L4.5 6.3L7.8 3" fill="none" stroke="#606060" stroke-width="1.9"/></svg>
<div class="sb" style="left:5px;top:541px;width:414px;height:16px;"></div>
<div class="sb" style="left:420px;top:541px;width:16px;height:16px;"></div>
<div class="th" style="left:385px;top:541px;width:17px;height:15px;"></div>
<svg class="a" style="left:9px;top:544px" width="9" height="9" viewBox="0 0 9 9"><path d="M6 1.2L2.7 4.5L6 7.8" fill="none" stroke="#606060" stroke-width="1.9"/></svg>
<svg class="a" style="left:406px;top:544px" width="9" height="9" viewBox="0 0 9 9"><path d="M3 1.2L6.3 4.5L3 7.8" fill="none" stroke="#606060" stroke-width="1.9"/></svg>
<div class="a" style="left:437px;top:181px;width:435px;height:377px;background:#fff;border-left:1px solid #a0a0a0;border-top:1px solid #a0a0a0;border-right:1px solid #fff;border-bottom:1px solid #fff"></div>
<div class="hdr" style="left:438px;top:182px;width:30px;"><span>Укр.</span></div>
<div class="hdr" style="left:468px;top:182px;width:33px;"><span>Тип</span></div>
<div class="hdr b" style="left:501px;top:182px;width:85px;"><span>Обоснование</span></div>
<div class="hdr" style="left:586px;top:182px;width:80px;"><span>Наименование</span></div>
<div class="hdr" style="left:666px;top:182px;width:53px;"><span>Ед. изм.</span></div>
<div class="hdr b" style="left:719px;top:182px;width:61px;"><span>Стоимость</span></div>
<div class="hdr b" style="left:780px;top:182px;width:70px;"><span>Процент</span></div>
<svg class="a" style="left:836px;top:186px" width="9" height="8" viewBox="0 0 9 8"><path d="M4.5 0.5L8.5 7.5H0.5" fill="none" stroke="#fff"/><path d="M4.5 0.5L0.5 7.5" fill="none" stroke="#a0a0a0"/></svg>
<div class="hl" style="left:438px;top:213px;width:412px"></div>
<div class="hl" style="left:438px;top:229px;width:412px"></div>
<div class="hl" style="left:438px;top:245px;width:412px"></div>
<div class="hl" style="left:438px;top:261px;width:412px"></div>
<div class="hl" style="left:438px;top:277px;width:412px"></div>
<div class="hl" style="left:438px;top:293px;width:412px"></div>
<div class="hl" style="left:438px;top:309px;width:412px"></div>
<div class="vl" style="left:467px;top:198px;height:112px"></div>
<div class="vl" style="left:500px;top:198px;height:112px"></div>
<div class="vl" style="left:585px;top:198px;height:112px"></div>
<div class="vl" style="left:665px;top:198px;height:112px"></div>
<div class="vl" style="left:718px;top:198px;height:112px"></div>
<div class="vl" style="left:779px;top:198px;height:112px"></div>
<div class="vl" style="left:849px;top:198px;height:112px"></div>
<div class="fcb" style="left:447px;top:200px"><svg class="a" style="left:1px;top:1px" width="7" height="7" viewBox="0 0 7 7" shape-rendering="crispEdges"><path d="M0 2h1v1h1v1h1v-1h1v-1h1v-1h1v-1h1v3h-1v1h-1v1h-1v1h-1v1h-1v-1h-1v-1h-1z" fill="#000"/></svg></div>
<div class="a" style="left:468px;top:198px;width:32px;height:15px;background:#0078d7;border:1px solid #2a1a10"></div>
<div class="a" style="left:468px;top:198px;width:32px;height:15px;border:1px dotted #ff8a28"></div>
<svg class="a" style="left:476px;top:202px" width="16" height="10" viewBox="0 0 16 10"><path d="M8.6 1.8L9.6 0.2H10.4V1.8z" fill="#5aa0ec"/><rect x="0" y="1.8" width="10.4" height="5" fill="#3a8ae8"/><rect x="0" y="4.2" width="10.4" height="2.6" fill="#1f6fdc"/><path d="M10.4 7V0.9H13.2L14.6 3.2H15.6L16 3.8V7z" fill="#f49a1e"/><path d="M11 1.6H12.9L13.6 2.9H11z" fill="#f4f8ff"/><rect x="1" y="6.3" width="14.6" height="0.9" fill="#1a1a1a"/><circle cx="3.4" cy="6.5" r="1.6" fill="#1a1a1a"/><circle cx="13.5" cy="6.5" r="1.6" fill="#1a1a1a"/><circle cx="3.4" cy="6.5" r="0.65" fill="#fff080"/><circle cx="13.5" cy="6.5" r="0.65" fill="#fff080"/><rect x="2" y="8.3" width="3" height="0.8" fill="#9a9a9a"/><rect x="12" y="8.3" width="3" height="0.8" fill="#9a9a9a"/><rect x="0.5" y="9" width="15.3" height="0.8" fill="#c4c4c4"/></svg>
<div class="cell" style="left:501px;top:198px;width:84px;padding-left:2px"><span style="letter-spacing:-0.62px">91.08.09-023</span></div>
<div class="cell" style="left:586px;top:198px;width:79px;padding-left:2px"><span style="letter-spacing:-0.42px">Трамбовки пневматические</span></div>
<div class="cell" style="left:666px;top:198px;width:52px;padding-left:2px"><span style="letter-spacing:-0.42px">маш.-ч</span></div>
<div class="cell" style="left:719px;top:198px;width:60px;text-align:right;padding-right:3px;letter-spacing:-0.72px"><span style="letter-spacing:-0.72px">0,112065</span></div>
<div class="cell" style="left:780px;top:198px;width:69px;text-align:center"><span style="letter-spacing:-0.8px">0,08%</span></div>
<div class="fcb" style="left:447px;top:216px"><svg class="a" style="left:1px;top:1px" width="7" height="7" viewBox="0 0 7 7" shape-rendering="crispEdges"><path d="M0 2h1v1h1v1h1v-1h1v-1h1v-1h1v-1h1v3h-1v1h-1v1h-1v1h-1v1h-1v-1h-1v-1h-1z" fill="#000"/></svg></div>
<svg class="a" style="left:476px;top:218px" width="16" height="10" viewBox="0 0 16 10"><path d="M8.6 1.8L9.6 0.2H10.4V1.8z" fill="#5aa0ec"/><rect x="0" y="1.8" width="10.4" height="5" fill="#3a8ae8"/><rect x="0" y="4.2" width="10.4" height="2.6" fill="#1f6fdc"/><path d="M10.4 7V0.9H13.2L14.6 3.2H15.6L16 3.8V7z" fill="#f49a1e"/><path d="M11 1.6H12.9L13.6 2.9H11z" fill="#f4f8ff"/><rect x="1" y="6.3" width="14.6" height="0.9" fill="#1a1a1a"/><circle cx="3.4" cy="6.5" r="1.6" fill="#1a1a1a"/><circle cx="13.5" cy="6.5" r="1.6" fill="#1a1a1a"/><circle cx="3.4" cy="6.5" r="0.65" fill="#fff080"/><circle cx="13.5" cy="6.5" r="0.65" fill="#fff080"/><rect x="2" y="8.3" width="3" height="0.8" fill="#9a9a9a"/><rect x="12" y="8.3" width="3" height="0.8" fill="#9a9a9a"/><rect x="0.5" y="9" width="15.3" height="0.8" fill="#c4c4c4"/></svg>
<div class="cell" style="left:501px;top:214px;width:84px;padding-left:2px"><span style="letter-spacing:-0.62px">91.08.03-015</span></div>
<div class="cell" style="left:586px;top:214px;width:79px;padding-left:2px"><span style="letter-spacing:-0.42px">Катки самоходные</span></div>
<div class="cell" style="left:666px;top:214px;width:52px;padding-left:2px"><span style="letter-spacing:-0.42px">маш.-ч</span></div>
<div class="cell" style="left:719px;top:214px;width:60px;text-align:right;padding-right:3px;letter-spacing:-0.72px"><span style="letter-spacing:-0.72px">4,10976</span></div>
<div class="a" style="left:782px;top:216px;width:1px;height:11px;background:#b9b9d1"></div>
<div class="cell" style="left:780px;top:214px;width:69px;text-align:center"><span style="letter-spacing:-0.8px">2,97%</span></div>
<div class="fcb" style="left:447px;top:232px"><svg class="a" style="left:1px;top:1px" width="7" height="7" viewBox="0 0 7 7" shape-rendering="crispEdges"><path d="M0 2h1v1h1v1h1v-1h1v-1h1v-1h1v-1h1v3h-1v1h-1v1h-1v1h-1v1h-1v-1h-1v-1h-1z" fill="#000"/></svg></div>
<svg class="a" style="left:476px;top:234px" width="16" height="10" viewBox="0 0 16 10"><path d="M8.6 1.8L9.6 0.2H10.4V1.8z" fill="#5aa0ec"/><rect x="0" y="1.8" width="10.4" height="5" fill="#3a8ae8"/><rect x="0" y="4.2" width="10.4" height="2.6" fill="#1f6fdc"/><path d="M10.4 7V0.9H13.2L14.6 3.2H15.6L16 3.8V7z" fill="#f49a1e"/><path d="M11 1.6H12.9L13.6 2.9H11z" fill="#f4f8ff"/><rect x="1" y="6.3" width="14.6" height="0.9" fill="#1a1a1a"/><circle cx="3.4" cy="6.5" r="1.6" fill="#1a1a1a"/><circle cx="13.5" cy="6.5" r="1.6" fill="#1a1a1a"/><circle cx="3.4" cy="6.5" r="0.65" fill="#fff080"/><circle cx="13.5" cy="6.5" r="0.65" fill="#fff080"/><rect x="2" y="8.3" width="3" height="0.8" fill="#9a9a9a"/><rect x="12" y="8.3" width="3" height="0.8" fill="#9a9a9a"/><rect x="0.5" y="9" width="15.3" height="0.8" fill="#c4c4c4"/></svg>
<div class="cell" style="left:501px;top:230px;width:84px;padding-left:2px"><span style="letter-spacing:-0.62px">91.05.01-017</span></div>
<div class="cell" style="left:586px;top:230px;width:79px;padding-left:2px"><span style="letter-spacing:-0.42px">Краны башенные</span></div>
<div class="cell" style="left:666px;top:230px;width:52px;padding-left:2px"><span style="letter-spacing:-0.42px">маш.-ч</span></div>
<div class="cell" style="left:719px;top:230px;width:60px;text-align:right;padding-right:3px;letter-spacing:-0.72px"><span style="letter-spacing:-0.72px">5,728104</span></div>
<div class="a" style="left:782px;top:232px;width:2px;height:11px;background:#b9b9d1"></div>
<div class="cell" style="left:780px;top:230px;width:69px;text-align:center"><span style="letter-spacing:-0.8px">4,14%</span></div>
<div class="fcb" style="left:447px;top:248px"><svg class="a" style="left:1px;top:1px" width="7" height="7" viewBox="0 0 7 7" shape-rendering="crispEdges"><path d="M0 2h1v1h1v1h1v-1h1v-1h1v-1h1v-1h1v3h-1v1h-1v1h-1v1h-1v1h-1v-1h-1v-1h-1z" fill="#000"/></svg></div>
<svg class="a" style="left:476px;top:250px" width="16" height="10" viewBox="0 0 16 10"><path d="M8.6 1.8L9.6 0.2H10.4V1.8z" fill="#5aa0ec"/><rect x="0" y="1.8" width="10.4" height="5" fill="#3a8ae8"/><rect x="0" y="4.2" width="10.4" height="2.6" fill="#1f6fdc"/><path d="M10.4 7V0.9H13.2L14.6 3.2H15.6L16 3.8V7z" fill="#f49a1e"/><path d="M11 1.6H12.9L13.6 2.9H11z" fill="#f4f8ff"/><rect x="1" y="6.3" width="14.6" height="0.9" fill="#1a1a1a"/><circle cx="3.4" cy="6.5" r="1.6" fill="#1a1a1a"/><circle cx="13.5" cy="6.5" r="1.6" fill="#1a1a1a"/><circle cx="3.4" cy="6.5" r="0.65" fill="#fff080"/><circle cx="13.5" cy="6.5" r="0.65" fill="#fff080"/><rect x="2" y="8.3" width="3" height="0.8" fill="#9a9a9a"/><rect x="12" y="8.3" width="3" height="0.8" fill="#9a9a9a"/><rect x="0.5" y="9" width="15.3" height="0.8" fill="#c4c4c4"/></svg>
<div class="cell" style="left:501px;top:246px;width:84px;padding-left:2px"><span style="letter-spacing:-0.62px">91.18.01-007</span></div>
<div class="cell" style="left:586px;top:246px;width:79px;padding-left:2px"><span style="letter-spacing:-0.42px">Компрессоры винтовые</span></div>
<div class="cell" style="left:666px;top:246px;width:52px;padding-left:2px"><span style="letter-spacing:-0.42px">маш.-ч</span></div>
<div class="cell" style="left:719px;top:246px;width:60px;text-align:right;padding-right:3px;letter-spacing:-0.72px"><span style="letter-spacing:-0.72px">7,09642</span></div>
<div class="a" style="left:782px;top:248px;width:3px;height:11px;background:#b9b9d1"></div>
<div class="cell" style="left:780px;top:246px;width:69px;text-align:center"><span style="letter-spacing:-0.8px">5,13%</span></div>
<div class="fcb" style="left:447px;top:264px"></div>
<svg class="a" style="left:476px;top:266px" width="16" height="10" viewBox="0 0 16 10"><path d="M8.6 1.8L9.6 0.2H10.4V1.8z" fill="#5aa0ec"/><rect x="0" y="1.8" width="10.4" height="5" fill="#3a8ae8"/><rect x="0" y="4.2" width="10.4" height="2.6" fill="#1f6fdc"/><path d="M10.4 7V0.9H13.2L14.6 3.2H15.6L16 3.8V7z" fill="#f49a1e"/><path d="M11 1.6H12.9L13.6 2.9H11z" fill="#f4f8ff"/><rect x="1" y="6.3" width="14.6" height="0.9" fill="#1a1a1a"/><circle cx="3.4" cy="6.5" r="1.6" fill="#1a1a1a"/><circle cx="13.5" cy="6.5" r="1.6" fill="#1a1a1a"/><circle cx="3.4" cy="6.5" r="0.65" fill="#fff080"/><circle cx="13.5" cy="6.5" r="0.65" fill="#fff080"/><rect x="2" y="8.3" width="3" height="0.8" fill="#9a9a9a"/><rect x="12" y="8.3" width="3" height="0.8" fill="#9a9a9a"/><rect x="0.5" y="9" width="15.3" height="0.8" fill="#c4c4c4"/></svg>
<div class="cell" style="left:501px;top:262px;width:84px;padding-left:2px"><span style="letter-spacing:-0.62px">91.06.06-048</span></div>
<div class="cell" style="left:586px;top:262px;width:79px;padding-left:2px"><span style="letter-spacing:-0.42px">Подъемники одномачтовые</span></div>
<div class="cell" style="left:666px;top:262px;width:52px;padding-left:2px"><span style="letter-spacing:-0.42px">маш.-ч</span></div>
<div class="cell" style="left:719px;top:262px;width:60px;text-align:right;padding-right:3px;letter-spacing:-0.72px"><span style="letter-spacing:-0.72px">9,483012</span></div>
<div class="a" style="left:782px;top:264px;width:4px;height:11px;background:#b9b9d1"></div>
<div class="cell" style="left:780px;top:262px;width:69px;text-align:center"><span style="letter-spacing:-0.8px">6,85%</span></div>
<div class="fcb" style="left:447px;top:280px"></div>
<svg class="a" style="left:476px;top:282px" width="16" height="10" viewBox="0 0 16 10"><path d="M8.6 1.8L9.6 0.2H10.4V1.8z" fill="#5aa0ec"/><rect x="0" y="1.8" width="10.4" height="5" fill="#3a8ae8"/><rect x="0" y="4.2" width="10.4" height="2.6" fill="#1f6fdc"/><path d="M10.4 7V0.9H13.2L14.6 3.2H15.6L16 3.8V7z" fill="#f49a1e"/><path d="M11 1.6H12.9L13.6 2.9H11z" fill="#f4f8ff"/><rect x="1" y="6.3" width="14.6" height="0.9" fill="#1a1a1a"/><circle cx="3.4" cy="6.5" r="1.6" fill="#1a1a1a"/><circle cx="13.5" cy="6.5" r="1.6" fill="#1a1a1a"/><circle cx="3.4" cy="6.5" r="0.65" fill="#fff080"/><circle cx="13.5" cy="6.5" r="0.65" fill="#fff080"/><rect x="2" y="8.3" width="3" height="0.8" fill="#9a9a9a"/><rect x="12" y="8.3" width="3" height="0.8" fill="#9a9a9a"/><rect x="0.5" y="9" width="15.3" height="0.8" fill="#c4c4c4"/></svg>
<div class="cell" style="left:501px;top:278px;width:84px;padding-left:2px"><span style="letter-spacing:-0.62px">91.14.02-001</span></div>
<div class="cell" style="left:586px;top:278px;width:79px;padding-left:2px"><span style="letter-spacing:-0.42px">Автомобили бортовые</span></div>
<div class="cell" style="left:666px;top:278px;width:52px;padding-left:2px"><span style="letter-spacing:-0.42px">маш.-ч</span></div>
<div class="cell" style="left:719px;top:278px;width:60px;text-align:right;padding-right:3px;letter-spacing:-0.72px"><span style="letter-spacing:-0.72px">30,443504</span></div>
<div class="a" style="left:782px;top:280px;width:14px;height:11px;background:#b9b9d1"></div>
<div class="cell" style="left:780px;top:278px;width:69px;text-align:center"><span style="letter-spacing:-0.8px">22%</span></div>
<div class="fcb" style="left:447px;top:296px"></div>
<svg class="a" style="left:476px;top:298px" width="16" height="10" viewBox="0 0 16 10"><path d="M8.6 1.8L9.6 0.2H10.4V1.8z" fill="#5aa0ec"/><rect x="0" y="1.8" width="10.4" height="5" fill="#3a8ae8"/><rect x="0" y="4.2" width="10.4" height="2.6" fill="#1f6fdc"/><path d="M10.4 7V0.9H13.2L14.6 3.2H15.6L16 3.8V7z" fill="#f49a1e"/><path d="M11 1.6H12.9L13.6 2.9H11z" fill="#f4f8ff"/><rect x="1" y="6.3" width="14.6" height="0.9" fill="#1a1a1a"/><circle cx="3.4" cy="6.5" r="1.6" fill="#1a1a1a"/><circle cx="13.5" cy="6.5" r="1.6" fill="#1a1a1a"/><circle cx="3.4" cy="6.5" r="0.65" fill="#fff080"/><circle cx="13.5" cy="6.5" r="0.65" fill="#fff080"/><rect x="2" y="8.3" width="3" height="0.8" fill="#9a9a9a"/><rect x="12" y="8.3" width="3" height="0.8" fill="#9a9a9a"/><rect x="0.5" y="9" width="15.3" height="0.8" fill="#c4c4c4"/></svg>
<div class="cell" style="left:501px;top:294px;width:84px;padding-left:2px"><span style="letter-spacing:-0.62px">91.06.05-011</span></div>
<div class="cell" style="left:586px;top:294px;width:79px;padding-left:2px"><span style="letter-spacing:-0.42px">Погрузчики одноковшовые</span></div>
<div class="cell" style="left:666px;top:294px;width:52px;padding-left:2px"><span style="letter-spacing:-0.42px">маш.-ч</span></div>
<div class="cell" style="left:719px;top:294px;width:60px;text-align:right;padding-right:3px;letter-spacing:-0.72px"><span style="letter-spacing:-0.72px">81,398584</span></div>
<div class="a" style="left:782px;top:296px;width:37px;height:11px;background:#b9b9d1"></div>
<div class="cell" style="left:780px;top:294px;width:69px;text-align:center"><span style="letter-spacing:-0.8px">58,83%</span></div>
<div class="sb" style="left:854px;top:182px;width:16px;height:375px;"></div>
<div class="th" style="left:854px;top:199px;width:15px;height:184px;background:#c1c1c1"></div>
<svg class="a" style="left:857px;top:187px" width="9" height="9" viewBox="0 0 9 9"><path d="M1.2 6L4.5 2.7L7.8 6" fill="none" stroke="#606060" stroke-width="1.9"/></svg>
<svg class="a" style="left:857px;top:544px" width="9" height="9" viewBox="0 0 9 9"><path d="M1.2 3L4.5 6.3L7.8 3" fill="none" stroke="#606060" stroke-width="1.9"/></svg>
<div class="a" style="left:4px;top:558px;width:867px;height:1px;background:#a0a0a0"></div>
<div class="cb" style="left:4px;top:563px"><svg class="a" style="left:2px;top:2px" width="7" height="7" viewBox="0 0 7 7" shape-rendering="crispEdges"><path d="M0 2h1v1h1v1h1v-1h1v-1h1v-1h1v-1h1v3h-1v1h-1v1h-1v1h-1v1h-1v-1h-1v-1h-1z" fill="#000"/></svg></div>
<div class="t" style="left:22.5px;top:564px;;letter-spacing:-0.599px">Отображать наименование</div>
<div class="cb" style="left:437px;top:563px"><svg class="a" style="left:2px;top:2px" width="7" height="7" viewBox="0 0 7 7" shape-rendering="crispEdges"><path d="M0 2h1v1h1v1h1v-1h1v-1h1v-1h1v-1h1v3h-1v1h-1v1h-1v1h-1v1h-1v-1h-1v-1h-1z" fill="#000"/></svg></div>
<div class="t" style="left:455.5px;top:564px;;letter-spacing:-0.599px">Отображать наименование</div>
<div class="a" style="left:4px;top:578px;width:433px;height:28px;background:#fff;border-left:1px solid #a0a0a0;border-top:1px solid #a0a0a0"></div>
<div class="a" style="left:437px;top:578px;width:434px;height:28px;background:#fff;border-left:1px solid #a0a0a0;border-top:1px solid #a0a0a0"></div>
<div class="sb" style="left:420px;top:579px;width:16px;height:26px;"></div>
<svg class="a" style="left:423px;top:582px" width="9" height="9" viewBox="0 0 9 9"><path d="M1.2 6L4.5 2.7L7.8 6" fill="none" stroke="#c4c4c4" stroke-width="1.9"/></svg>
<svg class="a" style="left:423px;top:594px" width="9" height="9" viewBox="0 0 9 9"><path d="M1.2 3L4.5 6.3L7.8 3" fill="none" stroke="#c4c4c4" stroke-width="1.9"/></svg>
<div class="sb" style="left:854px;top:579px;width:16px;height:26px;"></div>
<svg class="a" style="left:857px;top:582px" width="9" height="9" viewBox="0 0 9 9"><path d="M1.2 6L4.5 2.7L7.8 6" fill="none" stroke="#c4c4c4" stroke-width="1.9"/></svg>
<svg class="a" style="left:857px;top:594px" width="9" height="9" viewBox="0 0 9 9"><path d="M1.2 3L4.5 6.3L7.8 3" fill="none" stroke="#c4c4c4" stroke-width="1.9"/></svg>
<div class="t" style="left:5.5px;top:580px;;letter-spacing:-0.426px">Изделия из натурального камня</div>
<div class="t" style="left:438.5px;top:580px;;letter-spacing:-0.483px">Трамбовки пневматические при работе от передвижных компрессорных</div>
<div class="t" style="left:438.5px;top:593px;;letter-spacing:-0.508px">установок</div>
<div class="a" style="left:2px;top:612px;width:871px;height:57px;background:#ffffe1"></div>
<div class="t" style="left:2.5px;top:613px;;letter-spacing:-0.493px">Объединенный список ресурсов с типом "Машины".</div>
<div class="t" style="left:2.5px;top:626px;;letter-spacing:-0.518px">В первой колонке отмечены малоценные ресурсы сумма процентов которых</div>
<div class="t" style="left:2.5px;top:639px;;letter-spacing:-0.561px">не превышает заданный суммарный процент укрупнения.</div>
<div class="t" style="left:2.5px;top:652px;;letter-spacing:-0.531px">Цветом выделены ресурсы не привязанные к нормативной базе или присутствующие в наборе данных с другими ценами.</div>
<div class="a" style="left:1px;top:671px;width:873px;height:1px;background:#a0a0a0"></div>
<div class="a" style="left:1px;top:672px;width:873px;height:1px;background:#fff"></div>
<div class="cb" style="left:9px;top:688px"><svg class="a" style="left:2px;top:2px" width="7" height="7" viewBox="0 0 7 7" shape-rendering="crispEdges"><path d="M0 2h1v1h1v1h1v-1h1v-1h1v-1h1v-1h1v3h-1v1h-1v1h-1v1h-1v1h-1v-1h-1v-1h-1z" fill="#000"/></svg></div>
<div class="t" style="left:25.5px;top:689px;;letter-spacing:-0.648px">Отображать информационную панель</div>
<div class="btn" style="left:531px;top:682px;width:100px"><span>&lt; Назад</span></div>
<div class="btn" style="left:634px;top:682px;width:100px"><span>Далее &gt;</span></div>
<div class="btn" style="left:767px;top:682px;width:101px"><span>Отмена</span></div>
</div></body></html>
